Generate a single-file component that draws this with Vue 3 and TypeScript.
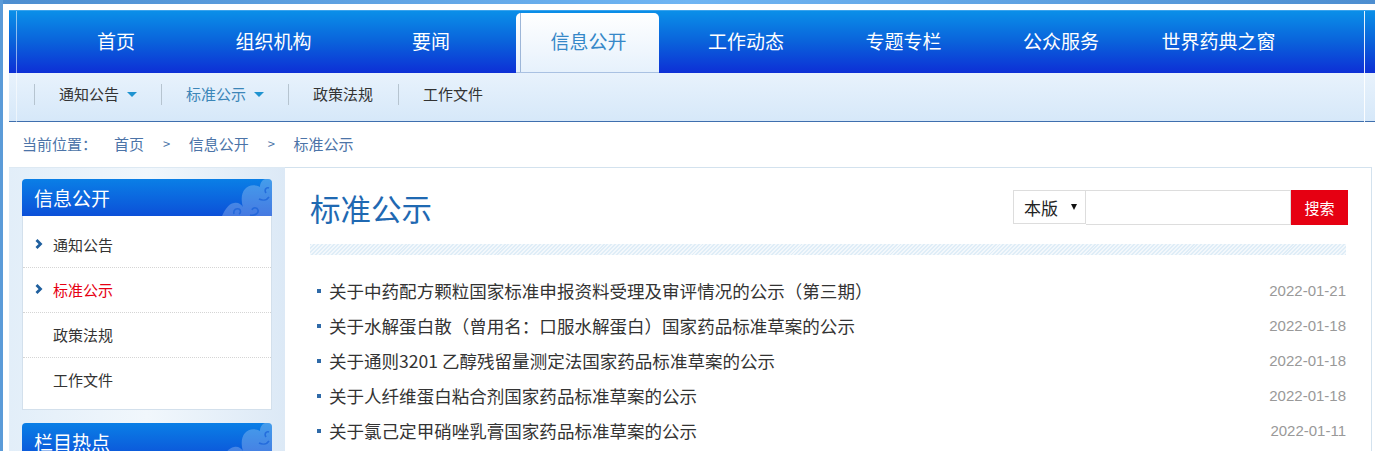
<script setup lang="ts">
const navItems: string[] = ['首页', '组织机构', '要闻', '信息公开', '工作动态', '专题专栏', '公众服务', '世界药典之窗']
const subItems: { label: string; arrow: boolean; on: boolean }[] = [
  { label: '通知公告', arrow: true, on: false },
  { label: '标准公示', arrow: true, on: true },
  { label: '政策法规', arrow: false, on: false },
  { label: '工作文件', arrow: false, on: false },
]
const sideItems: { label: string; mark: boolean; on: boolean }[] = [
  { label: '通知公告', mark: true, on: false },
  { label: '标准公示', mark: true, on: true },
  { label: '政策法规', mark: false, on: false },
  { label: '工作文件', mark: false, on: false },
]
const rows: { title: string; date: string }[] = [
  { title: '关于中药配方颗粒国家标准申报资料受理及审评情况的公示（第三期）', date: '2022-01-21' },
  { title: '关于水解蛋白散（曾用名：口服水解蛋白）国家药品标准草案的公示', date: '2022-01-18' },
  { title: '关于通则3201 乙醇残留量测定法国家药品标准草案的公示', date: '2022-01-18' },
  { title: '关于人纤维蛋白粘合剂国家药品标准草案的公示', date: '2022-01-18' },
  { title: '关于氯己定甲硝唑乳膏国家药品标准草案的公示', date: '2022-01-11' },
]
</script>

<template>
  <div class="page">
    <div class="topband"></div>
    <div class="shell">
      <nav class="nav">
        <a v-for="(item, i) in navItems" :key="item" class="nav-item" :class="{ active: i === 3 }">
          <span class="nav-label">{{ item }}</span>
        </a>
      </nav>
      <div class="subnav">
        <a v-for="s in subItems" :key="s.label" class="sub-item" :class="{ on: s.on }">
          {{ s.label }}<i v-if="s.arrow" class="caret"></i>
        </a>
      </div>
      <div class="crumbs">
        <span class="crumb-lead">当前位置：</span>
        <span>首页</span><span class="sep">&gt;</span>
        <span>信息公开</span><span class="sep">&gt;</span>
        <span>标准公示</span>
      </div>
      <div class="body">
        <aside class="side">
          <div class="side-title">
            信息公开
            <svg class="cloud" width="50" height="37" viewBox="0 0 50 37" aria-hidden="true">
              <path class="cloud-fill" d="M0 37C3 31 6 25 12 24C16 23 19 25 21 28C19 22 19 14 23 10C26 6 33 5 38 8C38 4 40 1 43 0H50V37Z"/>
              <path class="cloud-line" d="M12 35c-1-4 2-6 5-5 2 1 2 4 0 5M28 36c5 1 9-2 8-5-1-3-5-3-6 0M37 20c4 2 8 1 10-2M44 14c-2-3 0-6 3-5"/>
            </svg>
          </div>
          <ul class="side-list">
            <li v-for="s in sideItems" :key="s.label" class="side-item" :class="{ on: s.on }">
              <svg v-if="s.mark" class="chev" width="8" height="10" viewBox="0 0 8 10" aria-hidden="true">
                <path d="M1.5 1l4 4-4 4" fill="none" stroke="#1f5f9e" stroke-width="2.8"/>
              </svg>
              <span class="side-text">{{ s.label }}</span>
            </li>
          </ul>
          <div class="side-title second">
            栏目热点
            <svg class="cloud" width="50" height="37" viewBox="0 0 50 37" aria-hidden="true">
              <path class="cloud-fill" d="M0 37C3 31 6 25 12 24C16 23 19 25 21 28C19 22 19 14 23 10C26 6 33 5 38 8C38 4 40 1 43 0H50V37Z"/>
              <path class="cloud-line" d="M12 35c-1-4 2-6 5-5 2 1 2 4 0 5M28 36c5 1 9-2 8-5-1-3-5-3-6 0M37 20c4 2 8 1 10-2M44 14c-2-3 0-6 3-5"/>
            </svg>
          </div>
        </aside>
        <main class="main">
          <header class="main-head">
            <h1 class="main-title">标准公示</h1>
            <form class="search" @submit.prevent>
              <div class="scope">
                <select class="scope-select"><option>本版</option></select>
              </div>
              <input class="search-input" type="text" />
              <button class="search-btn" type="submit">搜索</button>
            </form>
          </header>
          <div class="stripe"></div>
          <ul class="rows">
            <li v-for="r in rows" :key="r.title" class="row">
              <i class="dot"></i>
              <span class="row-title">{{ r.title }}</span>
              <span class="row-date">{{ r.date }}</span>
            </li>
          </ul>
        </main>
      </div>
    </div>
  </div>
</template>

<style>
html, body { margin: 0; padding: 0; background: #fff; overflow: hidden; }
</style>

<style scoped>
.page {
  height: 451px;
  overflow: hidden;
  background: #fff;
  border-left: 3px solid #5b9bd8;
  box-sizing: border-box;
  font-family: "Noto Sans CJK SC", "Liberation Sans", sans-serif;
  position: relative;
}
.topband {
  height: 4px;
  margin-left: -3px;
  background: linear-gradient(90deg, #4d8ed0, #6fb5f3 50%, #4d8ed0);
}
.shell {
  padding: 6px 0 0 6px;
}
.nav {
  height: 63px;
  box-sizing: border-box;
  padding-left: 28.25px;
  display: grid;
  grid-template-columns: repeat(8, 157.5px);
  background: linear-gradient(180deg, #0a8fe8 0%, #0a62db 50%, #0d2fd6 100%);
  border-top: 1px solid #3aa3ec;
  position: relative;
}
.nav::before,
.nav::after {
  content: "";
  position: absolute;
  top: 0;
  height: 111px;
  width: 1px;
  background: rgba(255, 255, 255, 0.55);
}
.nav::before { left: 7px; }
.nav::after { left: 1355px; background: rgba(255, 255, 255, 0.9); }
.nav-item {
  display: flex;
  align-items: center;
  justify-content: center;
  color: #fff;
  font-size: 19px;
  line-height: 60px;
}
.nav-label { display: block; margin-top: -2px; }
.nav-item.active {
  margin: 2px 8.25px 0 6.25px;
  padding-left: 2px;
  border-radius: 5px 5px 0 0;
  background: linear-gradient(180deg, #ffffff 0%, #e6f1fc 100%);
  color: #3688c8;
  border-bottom: 1px solid #a9c1e2;
  position: relative;
}
.nav-item.active::before {
  content: "";
  position: absolute;
  left: 4px;
  top: 0;
  bottom: 0;
  width: 1px;
  background: #9db6d8;
}
.nav-item.active .nav-label { margin-top: -4px; }
.subnav {
  height: 49px;
  box-sizing: border-box;
  display: flex;
  align-items: center;
  padding: 0 0 5px 25px;
  background: linear-gradient(180deg, #e8f2fc 0%, #d6e8f9 100%);
  border-bottom: 1px solid #3f6fae;
}
.sub-item {
  display: flex;
  align-items: center;
  height: 21px;
  box-sizing: border-box;
  border-left: 1px solid #b6c4d0;
  padding: 0 24px 1px;
  font-size: 15px;
  color: #333;
  line-height: 20px;
}
.sub-item:nth-child(3) { padding-right: 25px; }
.sub-item.on { color: #3c86b8; }
.caret {
  width: 0;
  height: 0;
  margin-left: 8px;
  border-left: 5px solid transparent;
  border-right: 5px solid transparent;
  border-top: 5px solid #1f93d0;
}
.crumbs {
  height: 45px;
  box-sizing: border-box;
  display: flex;
  align-items: center;
  padding: 0 0 2px 13px;
  font-size: 15px;
  color: #4c74a8;
}
.crumb-lead { width: 92px; }
.sep { margin: 0 18.5px 0 19px; font-size: 13px; }
.body {
  display: flex;
  height: 400px;
  margin-right: 3px;
}
.side {
  width: 276px;
  flex: none;
  box-sizing: border-box;
  padding: 11px 13px 0;
  background: linear-gradient(90deg, #e2eef9 0%, #f1f7fc 50%, #dce9f6 100%);
  border-top: 1px solid #dde9f3;
}
.side-title {
  height: 37px;
  border-radius: 4px 4px 0 0;
  padding-left: 12px;
  line-height: 37px;
  font-size: 19px;
  color: #fff;
  background: linear-gradient(180deg, #0a7fe6 0%, #0c50d8 100%);
  position: relative;
  overflow: hidden;
}
.second { margin-top: 13px; }
.cloud { position: absolute; right: 0; top: 0; }
.cloud-fill { fill: #ffffff; fill-opacity: 0.24; }
.cloud-line { fill: none; stroke: #1a62d8; stroke-opacity: 0.75; stroke-width: 1.6; }
.side-list {
  list-style: none;
  margin: 0;
  padding: 7px 0 6px;
  background: #fff;
  border: 1px solid #d3e0ec;
  border-top: none;
  height: 194px;
  box-sizing: border-box;
}
.side-item {
  height: 45px;
  box-sizing: border-box;
  border-bottom: 1px dotted #d5d5d5;
  display: flex;
  align-items: center;
  position: relative;
  padding-left: 30px;
  font-size: 15px;
  color: #333;
}
.side-item:last-child { border-bottom: none; padding-bottom: 1px; }
.side-item.on .side-text { color: #e60012; }
.side-text { margin-top: -1px; }
.chev { position: absolute; left: 12px; top: 16px; }
.main {
  flex: 1;
  border-top: 1px solid #d3e2ee;
  border-right: 1px solid #d3e2ee;
  padding: 0 25px;
  box-sizing: border-box;
  min-width: 0;
}
.main-head {
  height: 76px;
  display: flex;
  justify-content: space-between;
  align-items: flex-start;
}
.main-title {
  margin: 18px 0 0;
  font-size: 30.5px;
  font-weight: 400;
  line-height: 44px;
  color: #1f69b2;
}
.search {
  display: flex;
  margin: 22px -2px 0 0;
}
.scope {
  width: 73px;
  height: 34px;
  box-sizing: border-box;
  border: 1px solid #dddddd;
  position: relative;
}
.scope::after {
  content: "";
  position: absolute;
  right: 8px;
  top: 13px;
  border-left: 3.5px solid transparent;
  border-right: 3.5px solid transparent;
  border-top: 6px solid #111;
}
.scope-select {
  appearance: none;
  width: 100%;
  height: 100%;
  border: 0;
  padding: 0 0 0 10px;
  margin: 0;
  background: transparent;
  font: 17px "Noto Sans CJK SC", sans-serif;
  color: #222;
  outline: none;
}
.search-input {
  width: 205px;
  height: 35px;
  box-sizing: border-box;
  border: 1px solid #dddddd;
  border-left: none;
  outline: none;
  padding: 0 6px;
  background: #fff;
}
.search-btn {
  width: 57px;
  height: 35px;
  border: 0;
  padding: 0;
  background: #e60012;
  color: #fff;
  font: 15px "Noto Sans CJK SC", sans-serif;
}
.stripe {
  height: 11px;
  background: repeating-linear-gradient(135deg, #dfedf7 0 1.4px, #f3f8fc 1.4px 2.8px);
}
.rows {
  list-style: none;
  margin: 0;
  padding: 18px 0 0;
}
.row {
  height: 35px;
  display: flex;
  align-items: center;
  position: relative;
  padding-left: 19px;
  font-size: 17.55px;
  color: #333;
}
.dot {
  position: absolute;
  left: 7px;
  top: 16px;
  width: 4px;
  height: 4px;
  background: #2f6aa8;
}
.row-title { flex: 1; white-space: nowrap; }
.row-date {
  font-size: 15px;
  color: #999;
  font-family: "Liberation Sans", sans-serif;
}
</style>
